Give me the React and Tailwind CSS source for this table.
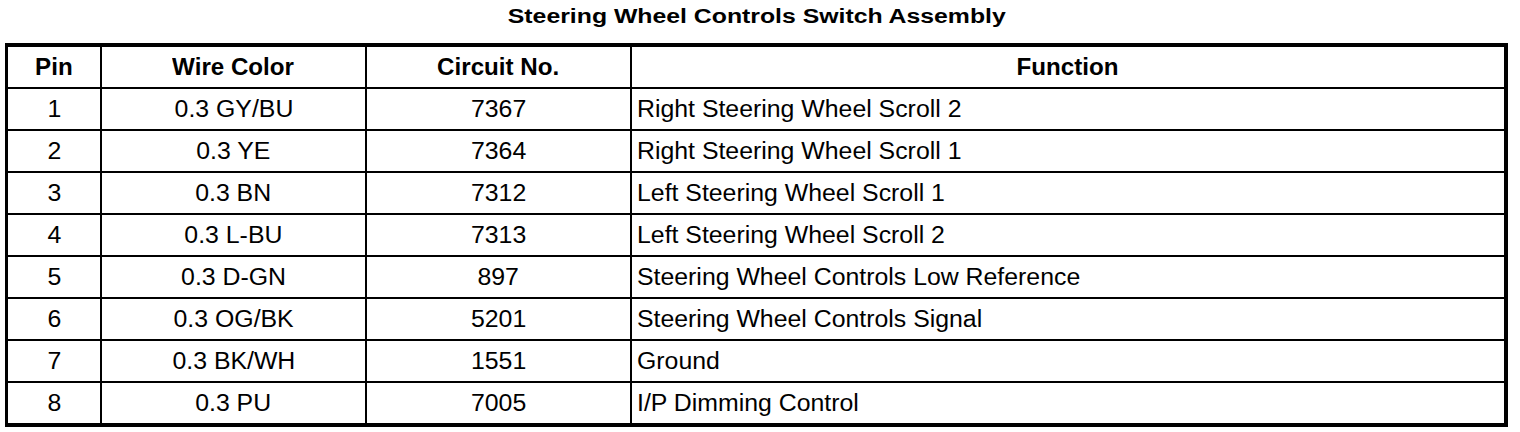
import React from 'react';

const rows = [
  { pin: '1', wire: '0.3 GY/BU', circuit: '7367', fn: 'Right Steering Wheel Scroll 2' },
  { pin: '2', wire: '0.3 YE', circuit: '7364', fn: 'Right Steering Wheel Scroll 1' },
  { pin: '3', wire: '0.3 BN', circuit: '7312', fn: 'Left Steering Wheel Scroll 1' },
  { pin: '4', wire: '0.3 L-BU', circuit: '7313', fn: 'Left Steering Wheel Scroll 2' },
  { pin: '5', wire: '0.3 D-GN', circuit: '897', fn: 'Steering Wheel Controls Low Reference' },
  { pin: '6', wire: '0.3 OG/BK', circuit: '5201', fn: 'Steering Wheel Controls Signal' },
  { pin: '7', wire: '0.3 BK/WH', circuit: '1551', fn: 'Ground' },
  { pin: '8', wire: '0.3 PU', circuit: '7005', fn: 'I/P Dimming Control' },
];

const cols = 'grid grid-cols-[94px_265px_265px_1fr]';

// texte un peu étiré horizontalement comme sur le document d'origine
const Cell = ({ children, left, head }) => (
  <div className={`flex items-center ${left ? 'pl-[5px]' : 'justify-center'}`}>
    <span className={`inline-block whitespace-nowrap ${head ? 'scale-x-[1.05]' : 'scale-x-[1.08]'} ${left ? 'origin-left' : 'origin-center'}`}>
      {children}
    </span>
  </div>
);

const App = () => {
  return (
    <div className="w-[1520px] h-[432px] bg-white text-black font-['Liberation_Sans',Arial,sans-serif] overflow-hidden">
      {/* Titre */}
      <div className="h-[43px] w-[1503px] ml-[5px] flex justify-center pt-[6px]">
        <h1 className="text-[20px] font-bold leading-none inline-block scale-x-[1.24] origin-center whitespace-nowrap h-fit">
          Steering Wheel Controls Switch Assembly
        </h1>
      </div>

      {/* Tableau */}
      <div className="ml-[5px] w-[1503px] border-black border-t-4 border-l-[3px] border-r-4 border-b-4">
        <div className={`${cols} h-[42px] border-b-2 border-black text-[23px] font-bold leading-none`}>
          <div className="border-r-2 border-black grid"><Cell head>Pin</Cell></div>
          <div className="border-r-2 border-black grid"><Cell head>Wire Color</Cell></div>
          <div className="border-r-2 border-black grid"><Cell head>Circuit No.</Cell></div>
          <Cell head>Function</Cell>
        </div>

        {rows.map((r, i) => (
          <div
            key={r.pin}
            className={`${cols} text-[23px] leading-none ${i < rows.length - 1 ? 'h-[42px] border-b-2 border-black' : 'h-[40px]'}`}
          >
            <div className="border-r-2 border-black grid"><Cell>{r.pin}</Cell></div>
            <div className="border-r-2 border-black grid"><Cell>{r.wire}</Cell></div>
            <div className="border-r-2 border-black grid"><Cell>{r.circuit}</Cell></div>
            <Cell left>{r.fn}</Cell>
          </div>
        ))}
      </div>
    </div>
  );
};

export default App;
